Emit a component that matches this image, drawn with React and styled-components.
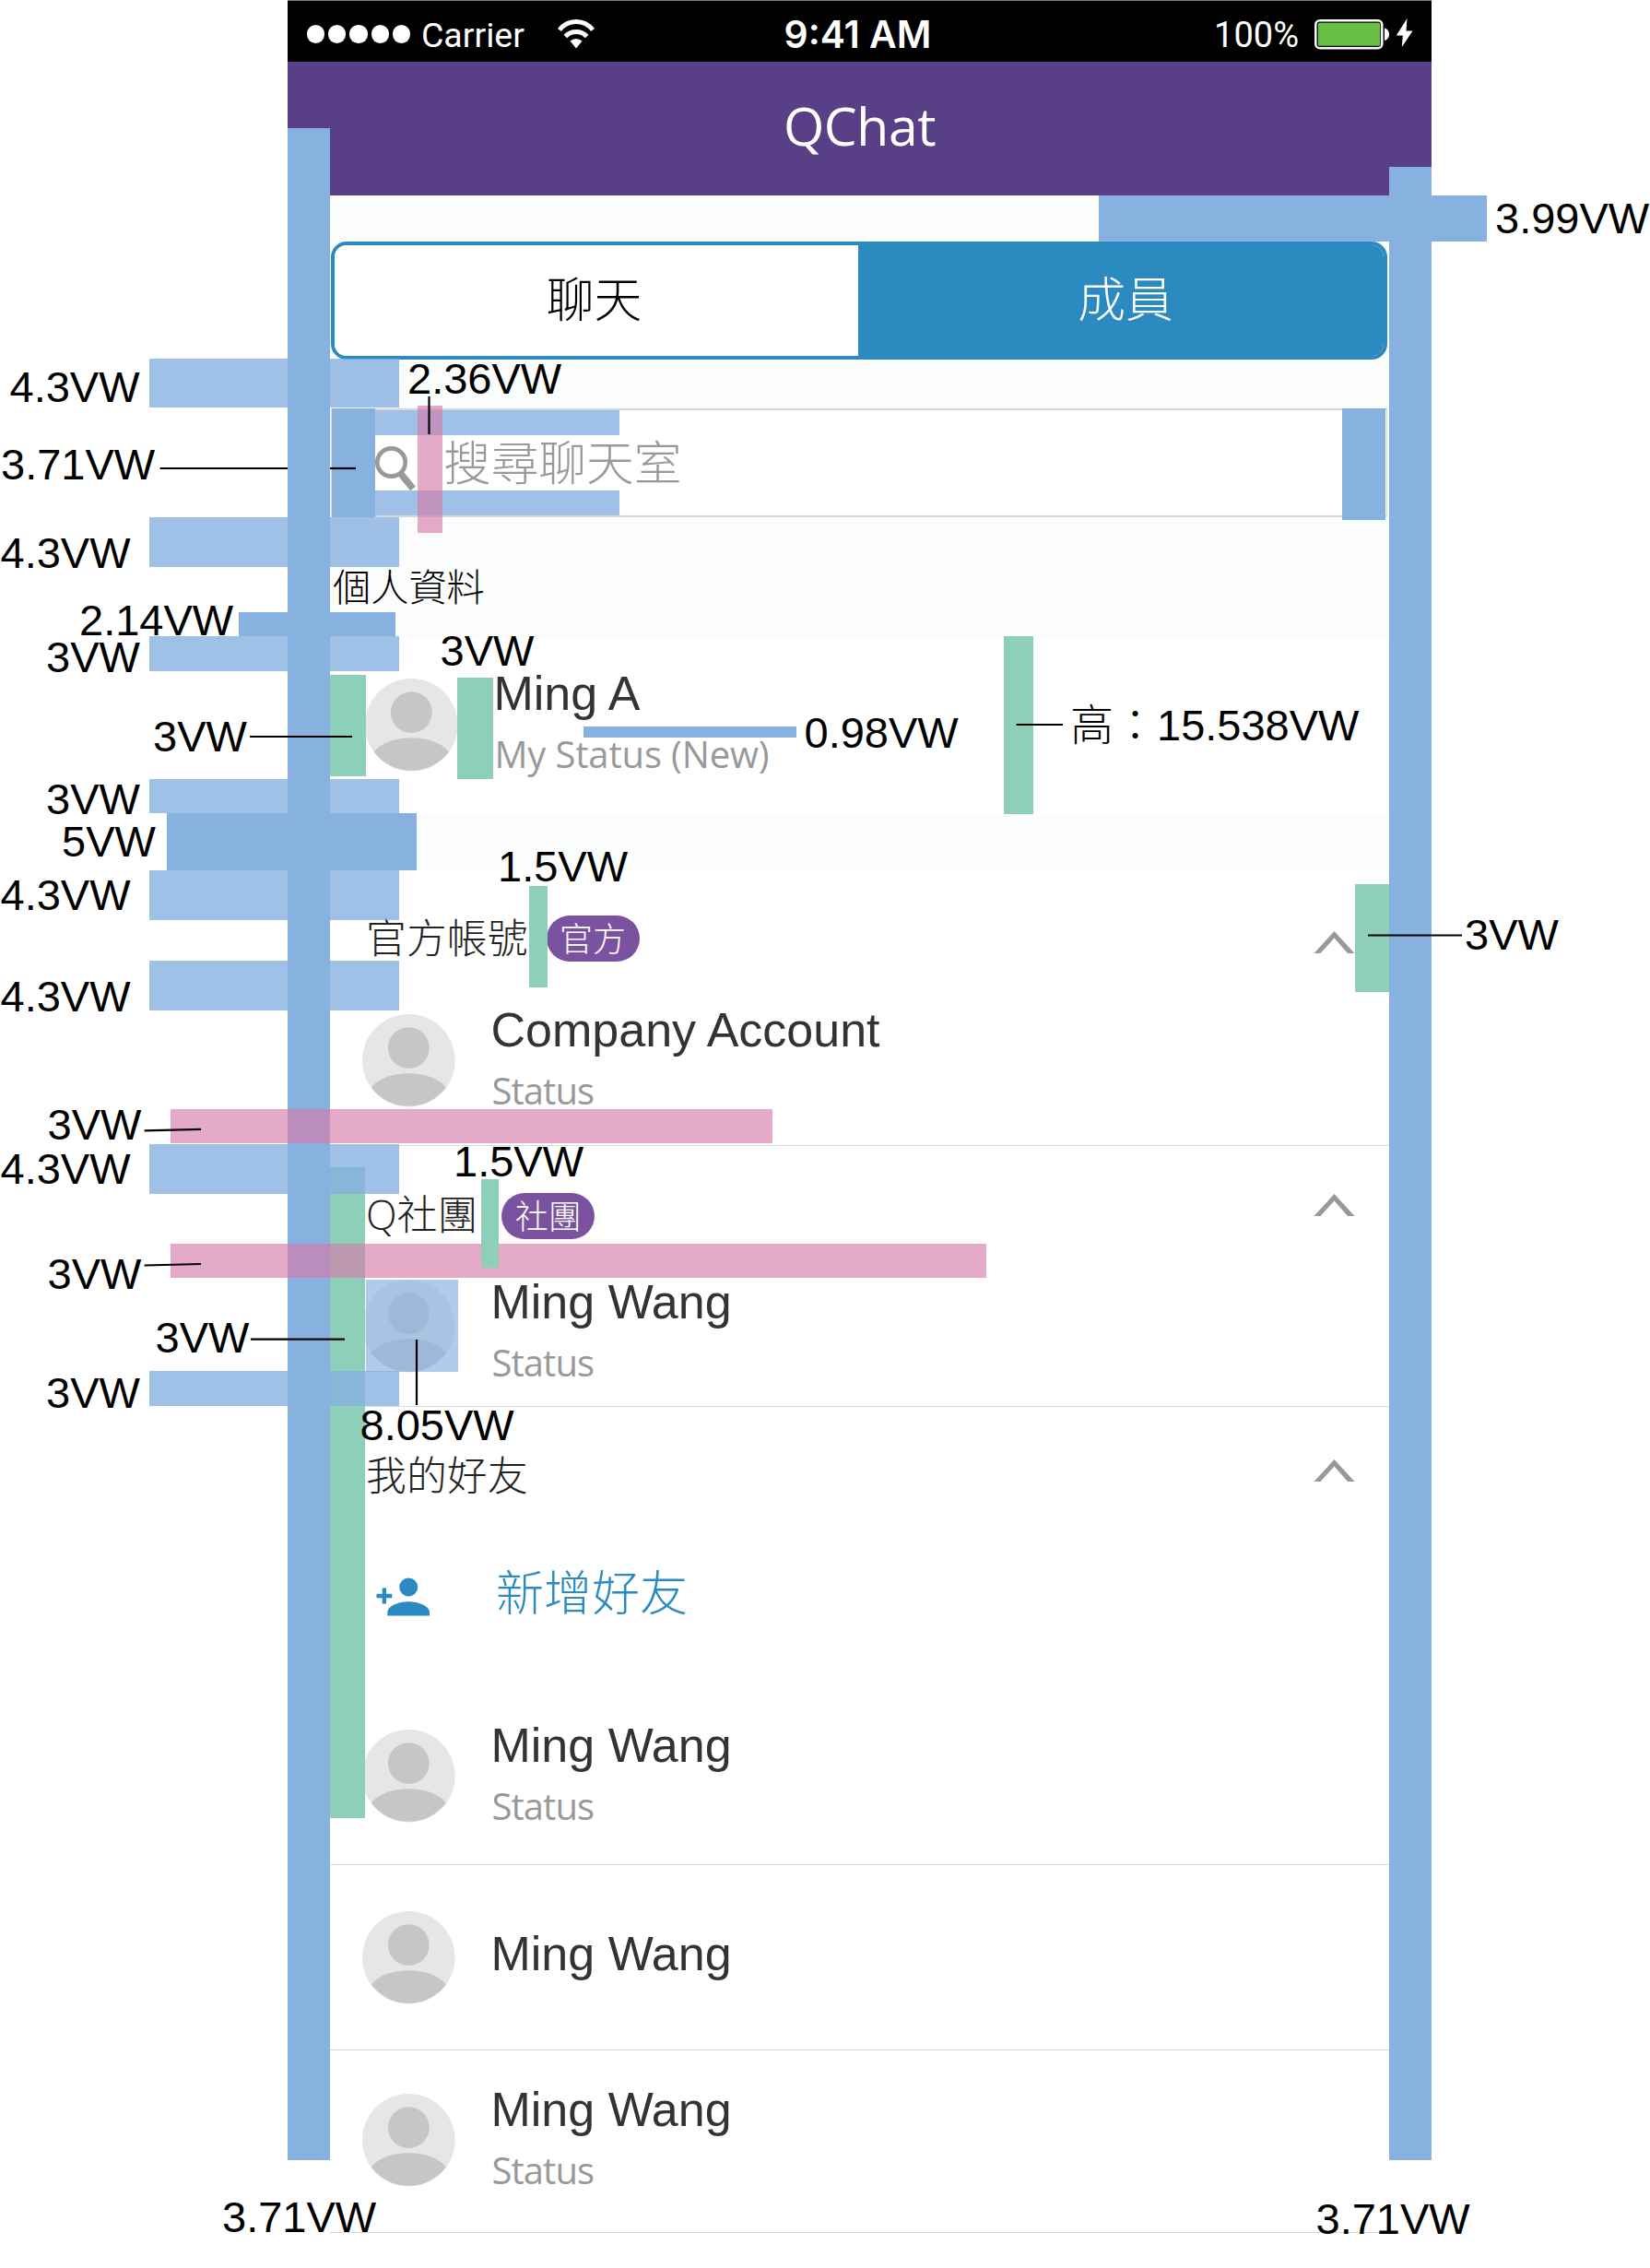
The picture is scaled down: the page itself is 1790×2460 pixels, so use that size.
import React from "react";
import styled, { createGlobalStyle } from "styled-components";

const latin = `"Liberation Sans", Arial, "Noto Sans CJK TC", sans-serif`;
const ui = `"Open Sans", "Noto Sans CJK TC", sans-serif`;
const han = `"Noto Sans CJK TC", sans-serif`;

const palette = {
  purple: "#594086",
  badge: "#7a52a0",
  blue: "#2b8bc0",
  guide: "#87b1df",
  band: "rgba(133, 175, 224, 0.79)",
  cover: "rgba(135, 177, 223, 0.66)",
  green: "#8dcfb8",
  pink: "rgba(212, 122, 169, 0.64)",
};

const GlobalStyle = createGlobalStyle`
  *, *::before, *::after { box-sizing: border-box; }
  body { margin: 0; background: #fff; }
`;

const Board = styled.main`
  position: relative;
  width: 1790px;
  height: 2460px;
  overflow: hidden;
  background: #fff;
`;

/* ---------- phone ---------- */

const Phone = styled.section`
  display: flex;
  flex-direction: column;
  width: 1241px;
  margin-left: 312px;
`;

const StatusBar = styled.div`
  display: grid;
  grid-template-columns: 1fr auto 1fr;
  align-items: center;
  height: 67px;
  padding: 6px 20px 0 21px;
  border-top: 1px solid #808080;
  background: #000;
  color: #fff;
`;

const StatusGroup = styled.div`
  display: flex;
  align-items: center;
  justify-content: ${(p) => (p.$end ? "flex-end" : "flex-start")};
`;

const SignalDots = styled.div`
  display: flex;
  gap: 4px;
  margin-right: 12px;
`;

const Dot = styled.i`
  width: 19.2px;
  height: 19.2px;
  border-radius: 50%;
  background: #fff;
`;

const StatusText = styled.span`
  margin-top: 2px;
  font: 400 ${(p) => p.$size}px/44px Roboto, sans-serif;
`;

const Clock = styled.span`
  padding-right: 5px;
  font: 600 40.8px/44px Inter, sans-serif;
`;

const WifiIcon = styled.svg`
  width: 40px;
  height: 32px;
  margin-left: 36px;
`;

const BatteryIcon = styled.svg`
  width: 108px;
  height: 36px;
  margin-left: 16px;
`;

const TitleBar = styled.header`
  display: flex;
  align-items: center;
  justify-content: center;
  height: 145px;
  padding-bottom: 7px;
  background: ${palette.purple};
  color: #fff;
  font: 400 57px/70px ${ui};
  letter-spacing: -0.4px;
`;

const TopPanel = styled.div`
  display: flex;
  flex-direction: column;
  height: 479px;
  padding: 50px 48px 0 47px;
  background: #fbfdfc;
`;

const Tabs = styled.div`
  display: grid;
  grid-template-columns: 568px 1fr;
  height: 128px;
  overflow: hidden;
  border: 4px solid ${palette.blue};
  border-radius: 17px;
  background: #fff;
`;

const Tab = styled.button`
  margin: 0;
  padding: 0 ${(p) => (p.$active ? 0 : 5)}px 8px ${(p) => (p.$active ? 10 : 0)}px;
  border: 0;
  background: ${(p) => (p.$active ? palette.blue : "#fff")};
  color: ${(p) => (p.$active ? "#fff" : "#000")};
  font: 300 51.8px/60px ${han};
`;

const SearchBox = styled.div`
  display: flex;
  align-items: center;
  height: 118px;
  margin-top: 53px;
  padding: 0 0 0 47px;
  border: 2px solid #d6d8d7;
  border-width: 2px 1px;
  background: #fff;
  color: #999;
`;

const SearchIcon = styled.svg`
  width: 46px;
  height: 50px;
  margin-top: 12px;
`;

const SearchText = styled.span`
  margin: -7px 0 0 28px;
  font: 300 51.7px/60px ${han};
`;

const GroupLabel = styled.h2`
  margin: 45px 0 0 2px;
  color: #000;
  font: 300 41.2px/56px ${han};
`;

const Gap = styled.div`
  height: 60px;
  background: #fbfdfc;
`;

const Section = styled.section`
  display: flex;
  flex-direction: column;
  height: ${(p) => p.$height}px;
  padding-top: ${(p) => p.$pad}px;
  margin: 0 46px;
  border-bottom: ${(p) => (p.$line ? "1px solid #dcdcdc" : "0")};
`;

const SectionHead = styled.div`
  display: flex;
  align-items: center;
  height: 50px;
  padding: 0 37px 0 39px;
`;

const SectionTitle = styled.h2`
  margin: ${(p) => p.$drop}px 0 0;
  color: #222;
  font: 300 43.9px/50px ${ui};
`;

const Badge = styled.span`
  display: flex;
  justify-content: center;
  width: 101px;
  height: 50px;
  margin-left: ${(p) => p.$gap}px;
  border-radius: 25px;
  background: ${palette.badge};
  color: #fff;
  font: 300 36px/46px ${han};
`;

const Chevron = styled.svg`
  width: 45px;
  height: 24px;
  margin-left: auto;
  margin-top: ${(p) => p.$shift * 2}px;
`;

const PersonRow = styled.div`
  display: flex;
  align-items: flex-start;
  margin-top: ${(p) => p.$top}px;
  padding-left: ${(p) => p.$indent ?? 35}px;
`;

const AvatarArt = styled.svg`
  flex: none;
  width: 101px;
  height: 101px;
`;

const PersonText = styled.div`
  display: flex;
  flex-direction: column;
  gap: 20px;
  margin: ${(p) => p.$shift}px 0 0 38.5px;
`;

const Name = styled.span`
  color: #333;
  font: 400 52px/52px ${latin};
`;

const Status = styled.span`
  margin-left: 1px;
  color: #999;
  font: 400 40px/40px ${ui};
  letter-spacing: ${(p) => p.$tracking}px;
`;

const FriendRow = styled.div`
  height: ${(p) => p.$height}px;
  margin: 0 46px;
  border-bottom: 1px solid #d8d8d8;
`;

const AddRow = styled.div`
  display: flex;
  align-items: center;
  height: 60px;
  margin-top: 74px;
  padding-left: 50px;
  color: ${palette.blue};
`;

const AddIcon = styled.svg`
  width: 58px;
  height: 42px;
  margin-top: 5px;
`;

const AddText = styled.span`
  margin: -8px 0 0 72px;
  font: 300 52px/60px ${han};
`;

/* ---------- spacing annotations laid over the phone ---------- */

const Guide = styled.div`
  position: absolute;
  left: ${(p) => p.$x}px;
  top: ${(p) => p.$y}px;
  width: ${(p) => p.$w}px;
  height: ${(p) => p.$h}px;
  background: ${(p) => palette[p.$tone]};
`;

const Leaders = styled.svg`
  position: absolute;
  inset: 0;
  width: 1790px;
  height: 2460px;
  stroke: #000;
  stroke-width: 2.2;
`;

const Measure = styled.span`
  position: absolute;
  left: ${(p) => p.$x}px;
  top: ${(p) => p.$base - 40.5}px;
  color: #000;
  font: 300 47px/47px ${latin};
  white-space: nowrap;
`;

const guides = [
  ["green", 358, 1266, 38, 706],
  ["band", 162, 389, 271, 53],
  ["band", 162, 561, 271, 54],
  ["guide", 259, 664, 170, 26],
  ["band", 162, 690, 271, 38],
  ["band", 162, 845, 271, 37],
  ["guide", 181, 882, 271, 62],
  ["band", 162, 944, 271, 54],
  ["band", 162, 1042, 271, 54],
  ["band", 162, 1241, 271, 54],
  ["band", 162, 1487, 271, 38],
  ["cover", 397, 1388, 100, 100],
  ["band", 407, 445, 265, 27],
  ["band", 407, 532, 265, 27],
  ["guide", 360, 443, 47, 118],
  ["guide", 1456, 443, 47, 121],
  ["guide", 312, 139, 46, 2204],
  ["guide", 1507, 181, 46, 2162],
  ["guide", 1192, 212, 421, 50],
  ["pink", 453, 440, 27, 138],
  ["pink", 185, 1203, 653, 37],
  ["pink", 185, 1349, 885, 37],
  ["green", 358, 732, 39, 110],
  ["green", 496, 735, 39, 110],
  ["green", 1089, 690, 32, 193],
  ["green", 574, 961, 20, 110],
  ["green", 1470, 959, 37, 117],
  ["green", 522, 1279, 19, 96],
  ["guide", 633, 788, 231, 12],
];

const leaders = [
  [173.6, 508, 312, 508],
  [358, 508, 386, 508],
  [465.5, 430, 465.5, 471],
  [271, 799, 382, 799],
  [1102.6, 786, 1153, 786],
  [1484, 1014.5, 1586, 1014.5],
  [156.6, 1226.3, 218, 1224.8],
  [156.6, 1372.5, 218, 1371],
  [272, 1452.7, 374, 1452.7],
  [452, 1453, 452, 1524],
];

const measures = [
  ["3.99VW", 1622, 253.5],
  ["4.3VW", 10.5, 436.5],
  ["2.36VW", 442, 427.5],
  ["3.71VW", 1, 520.5],
  ["4.3VW", 0.5, 616],
  ["2.14VW", 86, 689],
  ["3VW", 50, 729.5],
  ["3VW", 477.5, 722.5],
  ["3VW", 166, 815.7],
  ["0.98VW", 872.5, 811.5],
  ["高：15.538VW", 1161, 803.5],
  ["3VW", 50, 883],
  ["5VW", 67, 929],
  ["4.3VW", 0.5, 987.7],
  ["1.5VW", 540, 956],
  ["3VW", 1589, 1030],
  ["4.3VW", 0.5, 1097.7],
  ["3VW", 51.5, 1236.5],
  ["4.3VW", 0.5, 1284],
  ["1.5VW", 492, 1276],
  ["3VW", 51.5, 1398.5],
  ["3VW", 168.5, 1467.7],
  ["3VW", 50, 1527],
  ["8.05VW", 390.5, 1562.5],
  ["3.71VW", 241, 2421.5],
  ["3.71VW", 1427.5, 2423],
];

function Avatar() {
  return (
    <AvatarArt viewBox="0 0 101 101">
      <circle cx="50.3" cy="50.3" r="50.3" fill="#e4e7e6" />
      <circle cx="50.3" cy="36.6" r="22.4" fill="#c6c6c6" />
      <path d="M9.8 79.4C18 69.5 33 64.3 50.3 64.3S82.6 69.5 90.8 79.4A50.3 50.3 0 0 1 9.8 79.4Z" fill="#c6c6c6" />
    </AvatarArt>
  );
}

function Person({ name, status, top, indent, shift = -9.5, tracking = -0.95 }) {
  return (
    <PersonRow $top={top} $indent={indent}>
      <Avatar />
      <PersonText $shift={shift}>
        <Name>{name}</Name>
        {status && <Status $tracking={tracking}>{status}</Status>}
      </PersonText>
    </PersonRow>
  );
}

function Head({ title, badge, gap, shift, drop = -2 }) {
  return (
    <SectionHead>
      <SectionTitle $drop={drop}>{title}</SectionTitle>
      {badge && <Badge $gap={gap}>{badge}</Badge>}
      <Chevron $shift={shift} viewBox="0 0 45 24">
        <path d="M22.500 0L44.500 24H37L22.500 7.500L7.500 24H0.500Z" fill="#999" />
      </Chevron>
    </SectionHead>
  );
}

function PhoneStatus() {
  return (
    <StatusBar>
      <StatusGroup>
        <SignalDots>
          {[0, 1, 2, 3, 4].map((n) => (
            <Dot key={n} />
          ))}
        </SignalDots>
        <StatusText $size={37.5}>Carrier</StatusText>
        <WifiIcon viewBox="0 0 40 32" fill="none" stroke="#fff" strokeWidth="5">
          <path d="M2 11.5A22.5 22.5 0 0 1 38 11.5" />
          <path d="M8.3 18.5A16 16 0 0 1 31.7 18.5" />
          <path d="M20 31.5L13.5 23.5A9.5 9.5 0 0 1 26.5 23.5Z" fill="#fff" stroke="none" />
        </WifiIcon>
      </StatusGroup>
      <Clock>9:41 AM</Clock>
      <StatusGroup $end>
        <StatusText $size={38}>100%</StatusText>
        <BatteryIcon viewBox="0 0 108 36">
          <rect x="2.3" y="3.3" width="72" height="30" rx="4.5" fill="none" stroke="#fff" strokeWidth="2.5" />
          <rect x="4.8" y="5.8" width="67.5" height="25" rx="1.5" fill="#69be46" />
          <path d="M77 11.5C79.500 12 82 14.500 82 18.300S79.500 24.500 77 25Z" fill="#fff" />
          <path d="M101.5 1L89.8 19.5H96.8L95.8 32L107.5 14.5H100.5Z" fill="#fff" />
        </BatteryIcon>
      </StatusGroup>
    </StatusBar>
  );
}

export default function App() {
  return (
    <>
      <GlobalStyle />
      <Board>
        <Phone>
          <PhoneStatus />
          <TitleBar>QChat</TitleBar>
          <TopPanel>
            <Tabs>
              <Tab>聊天</Tab>
              <Tab $active>成員</Tab>
            </Tabs>
            <SearchBox>
              <SearchIcon viewBox="0 0 46 50" fill="none" stroke="#999">
                <circle cx="17.5" cy="18.5" r="15.2" strokeWidth="4.7" />
                <path d="M27.5 30.5L41 47" strokeWidth="7.5" />
              </SearchIcon>
              <SearchText>搜尋聊天室</SearchText>
            </SearchBox>
            <GroupLabel>個人資料</GroupLabel>
          </TopPanel>
          <Section $height={193} $pad={45}>
            <Person name="Ming A" status="My Status (New)" top={0} indent={38} shift={-10} tracking={-0.15} />
          </Section>
          <Gap />
          <Section $height={299} $pad={49} $line>
            <Head title="官方帳號" badge="官方" gap={20} shift={3.5} />
            <Person name="Company Account" status="Status" top={57} />
          </Section>
          <Section $height={283} $pad={51} $line>
            <Head title="Q社團" badge="社團" gap={26} shift={-12} drop={-5} />
            <Person name="Ming Wang" status="Status" top={44} shift={-2} />
          </Section>
          <Section $height={497} $pad={49} $line>
            <Head title="我的好友" shift={-5} drop={0} />
            <AddRow>
              <AddIcon viewBox="0 0 58 42" fill="currentColor">
                <circle cx="35.2" cy="10.5" r="10" />
                <path d="M12.3 41.5V38C12.3 31 24 26.2 35.2 26.2S58 31 58 38V41.5Z" />
                <path d="M6.7 11.5H11V17.7H17.3V22.2H11V28.500H6.700V22.200H0.500V17.700H6.700Z" />
              </AddIcon>
              <AddText>新增好友</AddText>
            </AddRow>
            <Person name="Ming Wang" status="Status" top={117} />
          </Section>
          <FriendRow $height={201}>
            <Person name="Ming Wang" top={50} shift={20} />
          </FriendRow>
          <FriendRow $height={198}>
            <Person name="Ming Wang" status="Status" top={47} />
          </FriendRow>
        </Phone>

        {guides.map(([tone, x, y, w, h], i) => (
          <Guide key={i} $tone={tone} $x={x} $y={y} $w={w} $h={h} />
        ))}
        <Leaders>
          {leaders.map(([x1, y1, x2, y2], i) => (
            <line key={i} x1={x1} y1={y1} x2={x2} y2={y2} />
          ))}
        </Leaders>
        {measures.map(([text, x, base], i) => (
          <Measure key={i} $x={x} $base={base}>
            {text}
          </Measure>
        ))}
      </Board>
    </>
  );
}
